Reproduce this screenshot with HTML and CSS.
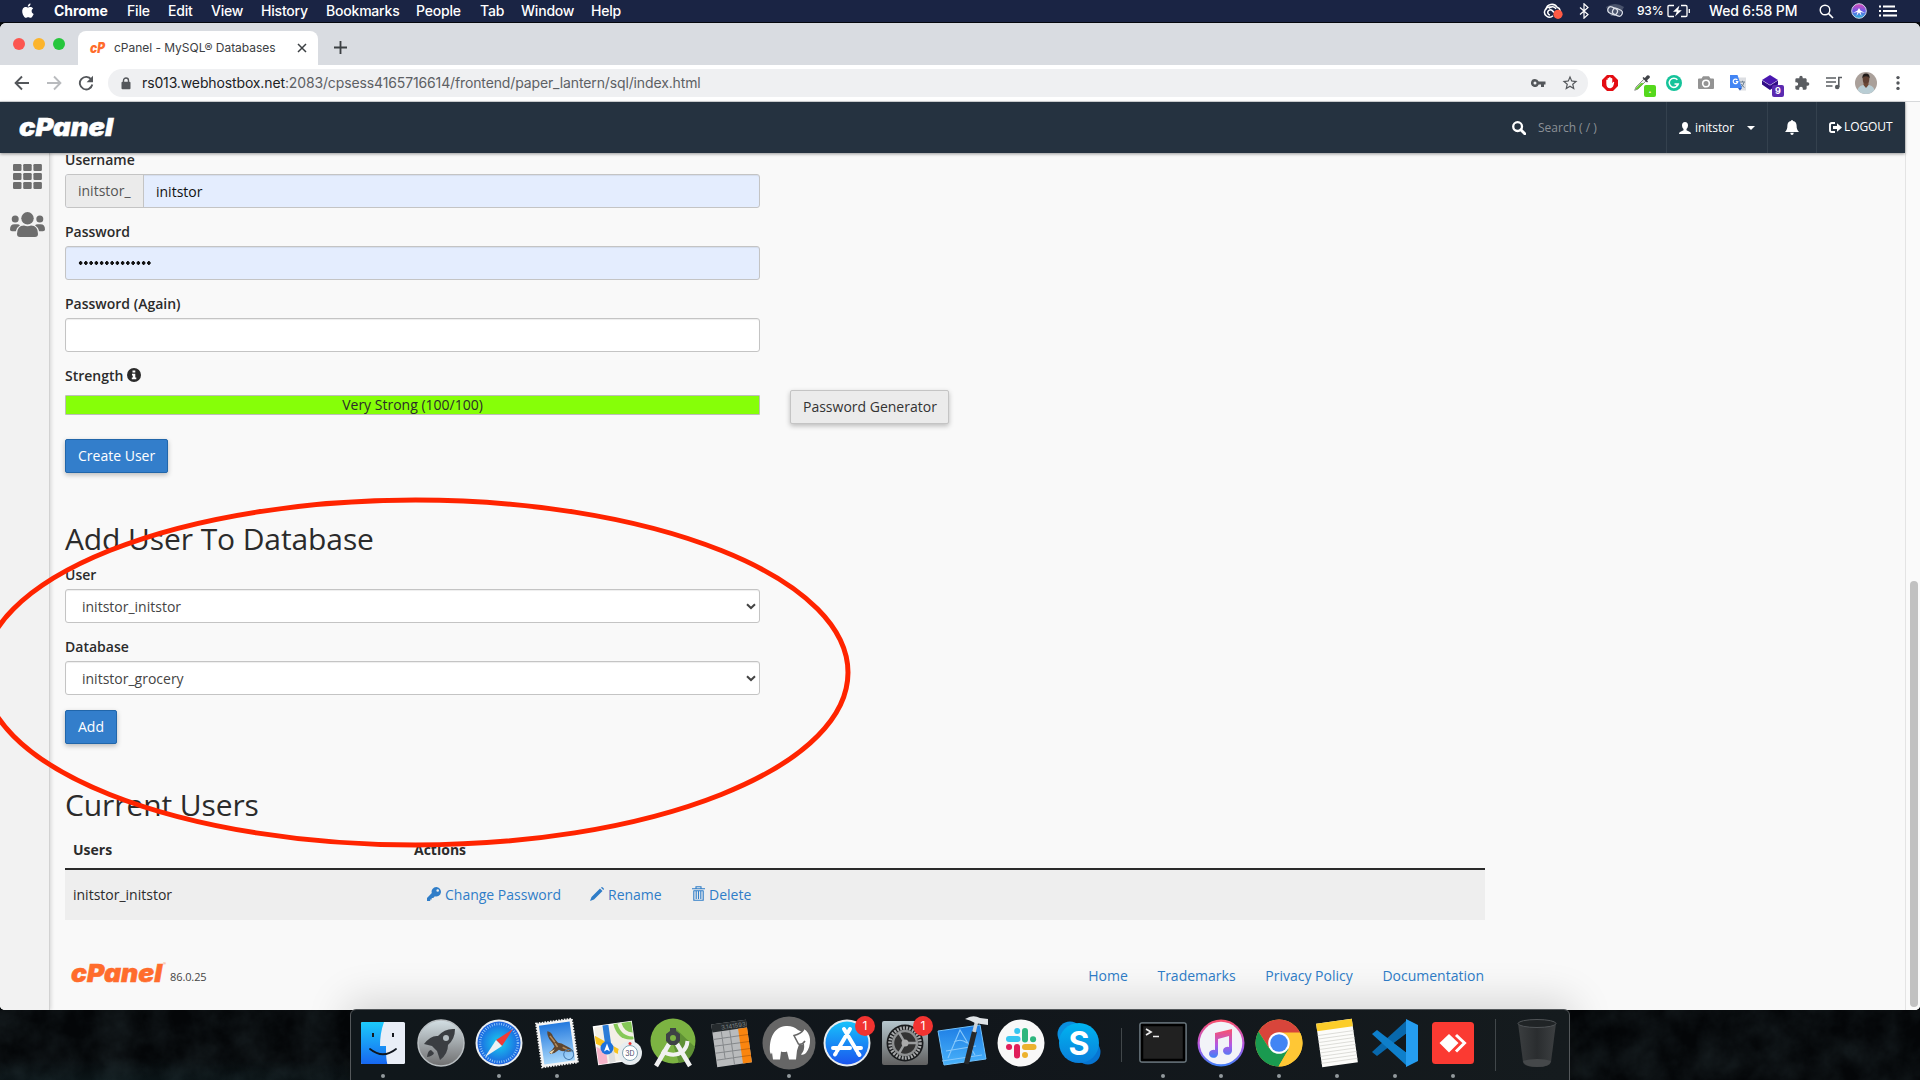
FILE: index.html
```html
<!DOCTYPE html>
<html lang="en">
<head>
<meta charset="utf-8">
<title>cPanel - MySQL® Databases</title>
<link rel="stylesheet" href="styles.css">
</head>
<body>
<div class="desktop">
  <header class="menubar">
    <nav class="menus">
      <svg class="apple" viewBox="0 0 14 17"><path d="M11.6 9c0-1.700 1.400-2.500 1.500-2.600-.8-1.200-2.100-1.400-2.500-1.400-1.100-.1-2.100.6-2.600.6S6.600 5 5.700 5C4.500 5 3.400 5.700 2.800 6.700c-1.300 2.200-.3 5.500.9 7.300.6.900 1.300 1.900 2.200 1.800.9 0 1.200-.6 2.300-.6s1.400.6 2.300.6c1 0 1.600-.9 2.100-1.800.7-1 1-2 1-2.100 0 0-2-.7-2-2.900zM9.800 3.700c.5-.6.8-1.400.7-2.200-.7 0-1.500.5-2 1-.4.500-.8 1.400-.7 2.100.8.100 1.600-.4 2-.9z" fill="#fff"/></svg>
      <b>Chrome</b><span>File</span><span>Edit</span><span>View</span><span>History</span><span>Bookmarks</span><span>People</span><span>Tab</span><span>Window</span><span>Help</span>
    </nav>
    <div class="status">
      <svg class="cc" viewBox="0 0 22 16"><g fill="none" stroke="#fff" stroke-width="1.500"><path d="M5 6.500A6 6 0 0 1 16 4.200a4 4 0 0 1 3 4"/><path d="M12 12.800A5 5 0 1 1 10.500 4.500M9 12a2.600 2.600 0 1 1 2-4.600l2 2"/><path d="M8 5.500a4 4 0 0 1 7 .5"/></g><circle cx="17" cy="11.300" r="4.600" fill="#ff5a44"/></svg>
      <svg class="bt" viewBox="0 0 10 16"><path d="M1 4.500l8 7-4 3.700V.8l4 3.700-8 7" fill="none" stroke="#fff" stroke-width="1.200"/></svg>
      <svg class="link" viewBox="0 0 20 15"><path d="M1 3Q10-3 19 3L14 12H6z" fill="#48526b"/><g fill="none" stroke="#dde1ea" stroke-width="1.300"><rect x="2.500" y="3.500" width="10" height="6.500" rx="3.200" transform="rotate(24 7.500 7)"/><rect x="7.500" y="5" width="10" height="6.500" rx="3.200" transform="rotate(24 12.500 8)"/></g></svg>
      <span class="pct">93%</span>
      <svg class="batt" viewBox="0 0 24 14"><path d="M7 1.500H2.200Q1 1.500 1 2.700v8.600q0 1.200 1.200 1.200H7M14 1.500h4.800q1.200 0 1.200 1.200v8.600q0 1.200-1.200 1.200H14M22.300 5v4" fill="none" stroke="#fff" stroke-width="1.300"/><path d="M12.500 1.500L6 7.700h3.800L8 12.500l6.800-6.200h-3.700z" fill="#fff"/></svg>
      <span class="clock">Wed 6:58 PM</span>
      <svg class="spot" viewBox="0 0 15 15"><circle cx="6" cy="6" r="4.800" fill="none" stroke="#fff" stroke-width="1.400"/><path d="M9.600 9.600l4.400 4.400" stroke="#fff" stroke-width="1.600"/></svg>
      <svg class="siri" viewBox="0 0 16 16"><defs><linearGradient id="si" x1="0" y1="0" x2="0" y2="1"><stop offset="0" stop-color="#e046b4"/><stop offset=".5" stop-color="#6a5be8"/><stop offset="1" stop-color="#23b9d8"/></linearGradient></defs><circle cx="8" cy="8" r="7.300" fill="url(#si)" stroke="#cdd3ea"/><path d="M8 5l1.500 2.500L14 10 9.500 9l1 4L8 9.500 5.500 13l1-4L2 10l4.500-2.500z" fill="#fff"/></svg>
      <svg class="list" viewBox="0 0 18 12"><path d="M0 1.500h2M0 6h2M0 10.500h2M4 1.500h12M4 6h14M4 10.500h14" stroke="#fff" stroke-width="1.800"/></svg>
    </div>
  </header>

  <section class="window">
    <div class="tabstrip">
      <div class="lights"><i class="red"></i><i class="amber"></i><i class="green"></i></div>
      <div class="tab">
        <svg class="favicon" viewBox="0 0 17 22"><text x="1" y="16" textLength="15" lengthAdjust="spacingAndGlyphs" class="mark">cP</text></svg>
        <span class="tab-title">cPanel - MySQL® Databases</span>
        <svg class="tab-x" viewBox="0 0 10 10"><path d="M1 1l8 8M9 1L1 9" stroke="#3c4043" stroke-width="1.500"/></svg>
      </div>
      <svg class="newtab" viewBox="0 0 12 12"><path d="M6 0v12M0 6h12" stroke="#3c4043" stroke-width="1.700"/></svg>
    </div>

    <div class="toolbar">
      <svg class="nav" viewBox="0 0 16 16"><path d="M15 8H2M8 1.500L1.600 8 8 14.500" fill="none" stroke="#54575b" stroke-width="1.900"/></svg>
      <svg class="nav" viewBox="0 0 16 16"><path d="M1 8h13M8 1.500L14.400 8 8 14.500" fill="none" stroke="#b9bbbe" stroke-width="1.900"/></svg>
      <svg class="nav" viewBox="0 0 16 16"><path d="M13.300 4.500A6.300 6.300 0 1 0 14.300 9.500" fill="none" stroke="#54575b" stroke-width="1.900"/><path d="M15 0.800v6.400H8.600z" fill="#54575b"/></svg>
      <div class="omnibox">
        <svg class="lock" viewBox="0 0 10 13"><path d="M2.500 5V3.500a2.500 2.500 0 0 1 5 0V5" fill="none" stroke="#54575b" stroke-width="1.400"/><rect x=".5" y="4.800" width="9" height="7.400" rx="1" fill="#54575b"/></svg>
        <span class="url"><b>rs013.webhostbox.net</b>:2083/cpsess4165716614/frontend/paper_lantern/sql/index.html</span>
        <svg class="key" viewBox="0 0 15 8"><path d="M4 0a4 4 0 1 0 3.700 5.400H10V8h3V5.400h1.500V2.600H7.700A4 4 0 0 0 4 0zm0 2.500a1.500 1.500 0 1 1 0 3 1.500 1.500 0 0 1 0-3z" fill="#54575b"/></svg>
        <svg class="star" viewBox="0 0 24 24"><path d="M22 9.240l-7.190-.62L12 2 9.190 8.630 2 9.240l5.460 4.730L5.820 21 12 17.270 18.180 21l-1.630-7.030L22 9.240zM12 15.400l-3.760 2.270 1-4.280-3.320-2.880 4.380-.38L12 6.100l1.710 4.040 4.380.38-3.320 2.880 1 4.280L12 15.400z" fill="#54575b"/></svg>
      </div>
      <div class="exts">
        <span><svg viewBox="0 0 16 16"><path d="M5 0h6l5 5v6l-5 5H5l-5-5V5z" fill="#e40d13"/><path d="M4.300 8.500V5q.7-.8 1.300 0V3.300q.8-.8 1.500 0v-.8q.8-.9 1.600 0v.8q.9-.7 1.600.2v4.700l.9-1.300q1-.3 1 .7C11.500 11 11 13 8.500 13.200 5.500 13.300 4.300 11.500 4.300 8.500z" fill="#fff"/></svg></span>
        <span><svg viewBox="0 0 16 16"><path d="M10 4L2 12l-1.300 3.300L4 14l8-8z" fill="#eee" stroke="#777" stroke-width=".8"/><path d="M7 8l3 .3L4 14l-2.500.7.500-1.700z" fill="#63cc2d"/><path d="M8.500 3l4.500 4.500 1-1-1-1.300L15.500 3A1.800 1.800 0 0 0 13 .5L10.800 3 9.500 2z" fill="#404348"/></svg><em class="lime">.</em></span>
        <span><svg viewBox="0 0 16 16"><circle cx="8" cy="8" r="8" fill="#15c39a"/><path d="M11.400 4.800A4.600 4.600 0 1 0 12.300 9H8.500M12.300 9l-1.800 2.300" fill="none" stroke="#fff" stroke-width="1.500"/></svg></span>
        <span><svg viewBox="0 0 16 16"><path d="M1 3.500h2.500L5 1.300h6l1.500 2.200H15q1 0 1 1V13q0 1-1 1H1q-1 0-1-1V4.500q0-1 1-1z" fill="#939393"/><circle cx="8" cy="8.500" r="3.300" fill="none" stroke="#fff" stroke-width="1.600"/></svg></span>
        <span><svg viewBox="0 0 16 16"><path d="M6 2.500h10v13H9z" fill="#dcdee2"/><path d="M10 7h5M12.500 5.800V7M10.500 12.500q3-1.500 3.500-5.300M11.300 9q1 2.300 3.200 3.500" fill="none" stroke="#6b7f92"/><path d="M0 0h7.500L12 13H0z" fill="#4285f4"/><path d="M8 13h4l-2 2.500z" fill="#2459c7"/><path d="M7.400 5A2.300 2.300 0 1 0 7.800 6.700H5.800" fill="none" stroke="#fff" stroke-width="1.200"/></svg></span>
        <span><svg viewBox="0 0 16 16"><path d="M8 0l8 5-8 5-8-5z" fill="#4a17b0"/><path d="M0 5.500l8 5 8-5v4L8 15 0 9.500z" fill="#310d87"/></svg><em class="violet">9</em></span>
        <span><svg viewBox="0 0 24 24"><path d="M20.500 11H19V7c0-1.100-.9-2-2-2h-4V3.500a2.500 2.500 0 0 0-5 0V5H4a2 2 0 0 0-2 2v3.800h1.500c1.500 0 2.700 1.200 2.700 2.700S5 16.200 3.500 16.200H2V20c0 1.100.9 2 2 2h3.800v-1.500c0-1.500 1.200-2.700 2.700-2.700s2.700 1.200 2.700 2.700V22H17a2 2 0 0 0 2-2v-4h1.500a2.500 2.500 0 0 0 0-5z" fill="#5a5d61"/></svg></span>
        <span><svg viewBox="0 0 16 16"><path d="M0 3h10M0 7h10M0 11h6.500" stroke="#5a5d61" stroke-width="1.500"/><path d="M12.800 12V2.500H16" fill="none" stroke="#5a5d61" stroke-width="1.600"/><circle cx="11.200" cy="12" r="2.300" fill="#5a5d61"/></svg></span>
        <span><svg class="avatar" viewBox="0 0 22 22"><defs><clipPath id="av"><circle cx="11" cy="11" r="11"/></clipPath></defs><g clip-path="url(#av)"><path d="M0 0h22v22H0z" fill="#aaa09a"/><path d="M2 22q0-8 6-9h6q6 1 6 9z" fill="#b9cdd4"/><path d="M8.500 9h5v4L11 16l-2.500-3z" fill="#6e4937"/><ellipse cx="11" cy="7" rx="3.300" ry="4.500" fill="#5f4033"/><path d="M7.400 6.500Q7 1.500 11 1.500t3.600 5Q14 4.300 11 4.300T7.400 6.500z" fill="#201b1a"/></g></svg></span>
        <span><svg viewBox="0 0 16 16"><g fill="#54575b"><circle cx="8" cy="2.600" r="1.700"/><circle cx="8" cy="8" r="1.700"/><circle cx="8" cy="13.400" r="1.700"/></g></svg></span>
      </div>
    </div>

    <div class="page">
      <div class="view">
        <div class="cp-header">
          <svg class="cp-logo" viewBox="0 0 100 32"><text x="1" y="24" textLength="94" lengthAdjust="spacingAndGlyphs" class="wordmark">cPanel</text></svg>
          <div class="cp-search">
            <svg viewBox="0 0 14 14"><circle cx="5.600" cy="5.600" r="4.400" fill="none" stroke="#fff" stroke-width="2.300"/><path d="M8.800 8.800l4 4" stroke="#fff" stroke-width="2.900" stroke-linecap="round"/></svg>
            <span>Search ( / )</span>
          </div>
          <div class="cp-user"><svg viewBox="0 0 12 12"><path d="M6 0C4 0 3 1.300 3 3.300c0 1.500.6 3 1.500 3.800v1.200L1 10Q0 10.500 0 12h12q0-1.500-1-2L7.500 8.300V7.100C8.400 6.300 9 4.800 9 3.300 9 1.300 8 0 6 0z" fill="#fff"/></svg><span>initstor</span><i class="caret"></i></div>
          <div class="cp-bell"><svg viewBox="0 0 14 15"><path d="M7 0q1 0 1 1c2.500.5 3.600 2.200 3.600 4.500 0 3.300.8 4.700 2.400 6.500H0c1.600-1.800 2.400-3.200 2.400-6.500C2.400 3.200 3.500 1.500 6 1q0-1 1-1zM5.200 12.800h3.600Q8.500 15 7 15t-1.800-2.200z" fill="#fff"/></svg></div>
          <div class="cp-logout"><svg viewBox="0 0 13 11"><path d="M6 1H2.800Q1 1 1 2.800v5.400Q1 10 2.800 10H6" fill="none" stroke="#fff" stroke-width="1.900"/><path d="M4 4h4V1.300l5 4.200-5 4.200V7H4z" fill="#fff"/></svg><span>LOGOUT</span></div>
        </div>

        <div class="cp-body">
          <aside class="sidebar">
            <svg class="grid-ic" viewBox="0 0 29 25"><g fill="#6e6e6e"><rect width="8.500" height="7" rx="1.200"/><rect x="10.200" width="8.500" height="7" rx="1.200"/><rect x="20.400" width="8.500" height="7" rx="1.200"/><rect y="9" width="8.500" height="7" rx="1.200"/><rect x="10.200" y="9" width="8.500" height="7" rx="1.200"/><rect x="20.400" y="9" width="8.500" height="7" rx="1.200"/><rect y="18" width="8.500" height="7" rx="1.200"/><rect x="10.200" y="18" width="8.500" height="7" rx="1.200"/><rect x="20.400" y="18" width="8.500" height="7" rx="1.200"/></g></svg>
            <svg class="users-ic" viewBox="0 0 35 25"><g fill="#6e6e6e"><circle cx="17.500" cy="6.300" r="6.200"/><circle cx="5.200" cy="7" r="3.500"/><circle cx="29.800" cy="7" r="3.500"/><path d="M7 22q0-8.500 7-8.500 3.500 1.500 7 0 7 0 7 8.500 0 3-3 3H10q-3 0-3-3zM0 17.500Q0 12.300 4.500 12.300h2.800q1.700 0 2.700 1-3.500 2.300-4.200 6H2q-2 0-2-1.800zM35 17.500q0-5.200-4.500-5.200h-2.800q-1.700 0-2.700 1 3.500 2.300 4.200 6H33q2 0 2-1.800z"/></g></svg>
          </aside>
          <main class="content">
            <div class="field"><label>Username</label><div class="control filled"><span class="addon">initstor_</span><span class="typed">initstor</span></div></div>
            <div class="field"><label>Password</label><div class="control filled"><span class="dots"></span></div></div>
            <div class="field"><label>Password (Again)</label><div class="control"></div></div>
            <div class="strength">
              <label>Strength <svg viewBox="0 0 14 14"><circle cx="7" cy="7" r="7" fill="#2b2b2b"/><path d="M5.500 2.500h2.800v2H5.500zM5 5.700h3.300v3.800h1v1.700H4.800V9.500h1V7.400H5z" fill="#fff"/></svg></label>
              <div class="meter-row"><div class="meter">Very Strong (100/100)</div><button class="btn plain">Password Generator</button></div>
            </div>
            <button class="btn primary">Create User</button>

            <h2 class="h-add">Add User To Database</h2>
            <div class="field"><label>User</label><div class="control select"><span>initstor_initstor</span><svg viewBox="0 0 10 7"><path d="M1 1.200l4 3.800 4-3.800" fill="none" stroke="#444" stroke-width="2"/></svg></div></div>
            <div class="field"><label>Database</label><div class="control select"><span>initstor_grocery</span><svg viewBox="0 0 10 7"><path d="M1 1.200l4 3.800 4-3.800" fill="none" stroke="#444" stroke-width="2"/></svg></div></div>
            <button class="btn primary add">Add</button>

            <h2 class="h-cur">Current Users</h2>
            <div class="table">
              <div class="tr th"><span>Users</span><span>Actions</span></div>
              <div class="tr td"><span>initstor_initstor</span>
                <div class="actions">
                  <a class="a-pass"><svg viewBox="0 0 14 14"><path d="M9.300 0a4.700 4.700 0 0 0-4.500 6.100L0 11v3h3.200v-1.500h1.500V11h1.500l1.700-1.800A4.700 4.700 0 1 0 9.300 0zm1.400 2.200a1.300 1.300 0 1 1 0 2.600 1.300 1.300 0 0 1 0-2.600z" fill="#2f7dc8"/></svg>Change Password</a>
                  <a class="a-ren"><svg viewBox="0 0 14 14"><path d="M10 1.500L12.500 4 4 12.500 0 14l1.500-4zM11 .7q.8-1.200 1.800-.2l.8.700q.8.900-.3 1.800z" fill="#2f7dc8"/></svg>Rename</a>
                  <a class="a-del"><svg viewBox="0 0 13 15"><path d="M0 2.700h13M4 2.500V.7h5v1.800M1.800 4.500v9.800h9.400V4.500M4.200 4.500v8.500M6.500 4.500v8.500M8.800 4.500v8.500M1.800 4.700h9.400" fill="none" stroke="#2f7dc8" stroke-width="1.100"/></svg>Delete</a>
                </div>
              </div>
            </div>
            <footer class="foot">
              <svg class="foot-logo" viewBox="0 0 100 32"><text x="2" y="25" textLength="91" lengthAdjust="spacingAndGlyphs" class="wordmark orange">cPanel</text><text x="94" y="8" class="reg">®</text></svg>
              <span class="ver">86.0.25</span>
              <nav><a>Home</a><a>Trademarks</a><a>Privacy Policy</a><a>Documentation</a></nav>
            </footer>
          </main>
        </div>
      </div>
      <div class="scroll"><i></i></div>
    </div>
  </section>

  <div class="wall">
    <svg class="grain" width="1920" height="70"><filter id="g"><feTurbulence type="fractalNoise" baseFrequency=".03" numOctaves="6" seed="4"/><feColorMatrix values="0 0 0 0 .1  0 0 0 0 .17  0 0 0 0 .19  1.100 0 0 0 -.3"/></filter><rect width="1920" height="70" filter="url(#g)"/></svg>
  </div>

  <div class="dock">
    <div class="app on"><svg viewBox="0 0 58 58"><defs><linearGradient id="f1" x1="0" y1="0" x2="0" y2="1"><stop offset="0" stop-color="#1ccbfb"/><stop offset="1" stop-color="#1767f1"/></linearGradient></defs><rect x="7" y="8" width="44" height="42" rx="1.500" fill="#e9eef7"/><path d="M8.500 8H30q-4 11-4 24h6v3q0 10 1.300 15H8.500Q7 50 7 48.500v-39Q7 8 8.500 8z" fill="url(#f1)"/><path d="M19 19v4M39 19v4" stroke="#161a20" stroke-width="2"/><path d="M16 35q13 10.500 26 0" fill="none" stroke="#10161f" stroke-width="1.800" stroke-linecap="round"/></svg></div>
    <div class="app"><svg viewBox="0 0 58 58"><defs><linearGradient id="l1" x1="0" y1="0" x2="0" y2="1"><stop offset="0" stop-color="#d3dfe4"/><stop offset="1" stop-color="#6f6f70"/></linearGradient></defs><circle cx="29" cy="29" r="23" fill="url(#l1)" stroke="#b9bfc2" stroke-width="1.500"/><path d="M43 15q-10-1-17 7-7-1-14 8l8 2 5 5 3 9q8-6 8-15 7-6 7-16zM19 36q-3 0-4 7 6-1 7-4z" fill="#3b3e42"/><circle cx="34" cy="24" r="3" fill="#b5bdc1"/></svg></div>
    <div class="app on"><svg viewBox="0 0 58 58"><defs><radialGradient id="s1"><stop offset="0" stop-color="#18d0ef"/><stop offset="1" stop-color="#1c62e0"/></radialGradient></defs><circle cx="29" cy="29" r="23.500" fill="#e9edf0"/><circle cx="29" cy="29" r="21.500" fill="url(#s1)"/><circle cx="29" cy="29" r="19" fill="none" stroke="#9fd2fb" stroke-width="2.500" stroke-dasharray=".8 1.600"/><path d="M43 15L26 26l6 6z" fill="#f03a37"/><path d="M15 43l11-17 6 6z" fill="#eef1f2"/></svg></div>
    <div class="app on"><svg viewBox="0 0 58 58"><defs><linearGradient id="m1" x1="0" y1="0" x2="0" y2="1"><stop offset="0" stop-color="#2379de"/><stop offset="1" stop-color="#a9d8fb"/></linearGradient></defs><g transform="rotate(-8 29 29)"><rect x="11" y="7" width="36" height="44" fill="#f4f4f4" stroke="#f4f4f4" stroke-width="2" stroke-dasharray="1.600 1.200"/><rect x="13.500" y="9.500" width="31" height="39" fill="url(#m1)"/><path d="M21 16q4 1 5 6 2 4 4 7 4 1 6 3 5 3 8 7-5 1-9-1-3 0-5-2-4 3-9 3l-1-2q4-2 6-5-1-3-3-6-3-5-2-10z" fill="#5f4630"/><path d="M27 29l2 4M23 21l4 7M34 34l6 4" stroke="#b58c5c" stroke-width="1.500"/><path d="M20 37l6-2-4 4z" fill="#e9d9b5"/><circle cx="39" cy="42" r="5" fill="none" stroke="#4479ae"/></g></svg></div>
    <div class="app"><svg viewBox="0 0 58 58"><g transform="rotate(-8 29 29)"><rect x="10" y="10" width="38" height="38" fill="#f3efe6" stroke="#fff" stroke-width="1.500"/><path d="M30 10h18v18Q32 28 30 10z" fill="#86c858"/><path d="M36 10q2 12 12 13" fill="none" stroke="#f3efe6" stroke-width="4"/><path d="M10 19l28 21h-8L10 27z" fill="#f9c31c"/><path d="M10 30l9 7v11h-9z" fill="#f6b4c9"/><path d="M21 48V32h6v16z" fill="#ddd"/><path d="M19 10h6v24h-6z" fill="#2b7cd8"/></g><circle cx="21" cy="34" r="6.500" fill="#1d72dc"/><path d="M21 29.500l3 8-3-1.800-3 1.800z" fill="#fff"/><circle cx="44" cy="39" r="12" fill="#e8edf0"/><circle cx="44" cy="39" r="7.500" fill="#fff" stroke="#80a2b2"/><text x="44" y="42" class="three">3D</text><circle cx="44" cy="29.500" r="1.500" fill="#e33"/></svg></div>
    <div class="app"><svg viewBox="0 0 58 58"><circle cx="29" cy="27" r="22.500" fill="#7cb342"/><path d="M32 15l19 18Q47 48 35 49L29 30z" fill="#5f9135"/><path d="M25 30L12 52M33 30l13 22" stroke="#f1f1f1" stroke-width="4.500"/><path d="M18 37q11 7 20 1 5-4 5.500-11" fill="none" stroke="#f1f1f1" stroke-width="4"/><path d="M26 14h6v3l4 3v7l-4 4h-6l-4-4v-7l4-3z" fill="#3e4245"/><circle cx="29" cy="24" r="3" fill="#7cb342"/></svg></div>
    <div class="app"><svg viewBox="0 0 58 58"><g transform="rotate(-8 29 29)"><rect x="12" y="8" width="35" height="43" fill="#b9bbbd"/><rect x="12" y="8" width="35" height="8" fill="#262b2e"/><rect x="38" y="16" width="9" height="35" fill="#fa850f"/><path d="M12 23h26M12 30h26M12 37h26M12 44h26M21 16v28M29.500 16v35" stroke="#85888b"/><path d="M38 23h9M38 30h9M38 37h9M38 44h9" stroke="#c9690c"/><text x="46" y="14.500" class="calc">3.141593</text></g></svg></div>
    <div class="app on"><svg viewBox="0 0 58 58"><circle cx="29" cy="29" r="26.500" fill="#666"/><path d="M10 38C9 24 14 13 26 12q7-.5 12 4 2 1.500 4 1l2-2q5 3 6 10 .5 8-4 14-2.500 2.500-5 1.500 4-4 3-11-2 2-5 1l-2 6-1 9h-7l-2-8q-3 1-6 0l-1 8h-7l-1-7-1 2z" fill="#fff"/><path d="M44 15q-3 5-10 6.500L38.500 30q4 1 6.500-3" fill="none" stroke="#666" stroke-width="1.500"/></svg></div>
    <div class="app"><svg viewBox="0 0 58 58"><defs><linearGradient id="a1" x1="0" y1="0" x2="0" y2="1"><stop offset="0" stop-color="#17c2fb"/><stop offset="1" stop-color="#1b54ee"/></linearGradient></defs><circle cx="29" cy="29" r="23.500" fill="#e8ecef"/><circle cx="29" cy="29" r="21.500" fill="url(#a1)"/><path d="M32 15L19 37M26 15l13 22M15 34h17M38 34h5M18 39l-1 1.500M40 39l1.500 2" stroke="#fff" stroke-width="4" stroke-linecap="round"/></svg><em>1</em></div>
    <div class="app"><svg viewBox="0 0 58 58"><defs><linearGradient id="p1" x1="0" y1="0" x2="0" y2="1"><stop offset="0" stop-color="#b5c6cd"/><stop offset="1" stop-color="#606060"/></linearGradient></defs><rect x="6" y="7" width="46" height="44" rx="2" fill="url(#p1)"/><circle cx="29" cy="29" r="18.500" fill="#191b1d"/><circle cx="29" cy="29" r="15" fill="none" stroke="#a7a9aa" stroke-width="3.500" stroke-dasharray="1.900 1.200"/><circle cx="29" cy="29" r="12" fill="#333" stroke="#8d8f90" stroke-width="2.500"/><path d="M29 29h12M29 29l-6-10.400M29 29l-6 10.400" stroke="#9b9d9e" stroke-width="2.500"/><circle cx="29" cy="29" r="3.500" fill="#aaa"/></svg><em>1</em></div>
    <div class="app"><svg viewBox="0 0 58 58"><defs><linearGradient id="x1" x1="0" y1="0" x2="0" y2="1"><stop offset="0" stop-color="#1c7ce4"/><stop offset="1" stop-color="#49b2fa"/></linearGradient></defs><path d="M4 17l42-6 6 34-42 6z" fill="url(#x1)" stroke="#6fc0fb"/><path d="M14 44l12-28 15 25M12 37l30-5M20 28q7-4 13 1M8 47l40-6" fill="none" stroke="#86c8fb" stroke-width="1.100"/><path d="M43 18L35 50q-3 1-5-1l8-32z" fill="#26282b"/><path d="M40 18l3-12" stroke="#ccd2d6" stroke-width="3.500"/><path d="M31 5q8-5 15-1l8 1v6l-7-1-6-1q-5-3-10-4z" fill="#dfe3e6"/></svg></div>
    <div class="app"><svg viewBox="0 0 58 58"><circle cx="29" cy="29" r="23.500" fill="#f8f8f8"/><g stroke-width="6" stroke-linecap="round"><path d="M17 25h8.500" stroke="#36c5f0"/><path d="M25.200 17v.1" stroke="#36c5f0"/><path d="M33 17v8.500" stroke="#2eb67d"/><path d="M41 25.200h.1" stroke="#2eb67d"/><path d="M33 33h8.500" stroke="#ecb22e"/><path d="M33 41v.1" stroke="#ecb22e"/><path d="M25 33v8.500" stroke="#e01e5a"/><path d="M17 33h.1" stroke="#e01e5a"/></g></svg></div>
    <div class="app"><svg viewBox="0 0 58 58"><g fill="#0a8fdf"><circle cx="20" cy="20" r="12.500"/><circle cx="38" cy="38" r="12.500" fill="#0775d2"/></g><defs><linearGradient id="k1" x1="0" y1="0" x2="0" y2="1"><stop offset="0" stop-color="#00b4f0"/><stop offset="1" stop-color="#0a7fdb"/></linearGradient></defs><circle cx="29" cy="29" r="20" fill="url(#k1)"/><text x="29" y="40.500" class="skype">S</text></svg></div>
    <i class="sep"></i>
    <div class="app on"><svg viewBox="0 0 58 58"><rect x="6" y="9" width="46" height="39" rx="2" fill="#212121" stroke="#75838a" stroke-width="1.500"/><rect x="8" y="11" width="42" height="35" fill="none" stroke="#000" stroke-width="2.500"/><path d="M12 15l5 3-5 3M19 22.500h6" fill="none" stroke="#eee" stroke-width="1.700"/></svg></div>
    <div class="app on"><svg viewBox="0 0 58 58"><defs><linearGradient id="i2" x1="0" y1="0" x2="0" y2="1"><stop offset="0" stop-color="#fb5069"/><stop offset=".55" stop-color="#b358e4"/><stop offset="1" stop-color="#3d81f8"/></linearGradient></defs><circle cx="29" cy="29" r="23.500" fill="url(#i2)"/><circle cx="29" cy="29" r="21.300" fill="#f2f3f8"/><path d="M23 19l17-4v22a4.500 4 0 1 1-3-4V22l-11 3v15a4.500 4 0 1 1-3-4z" fill="url(#i2)"/></svg></div>
    <div class="app on"><svg viewBox="0 0 58 58"><circle cx="29" cy="29" r="23.500" fill="#ffc735"/><path d="M8.500 17.500A23.500 23.500 0 0 1 50 18.500H29L19 34z" fill="#d8453b"/><path d="M8.500 17.500A23.500 23.500 0 0 0 28.500 52.500L38.500 35 19 34z" fill="#1a9a50"/><path d="M28.500 52.500L39 35V19h11.300A23.500 23.500 0 0 1 28.500 52.500z" fill="#ffc735"/><circle cx="29" cy="29" r="10.800" fill="#fff"/><circle cx="29" cy="29" r="8.800" fill="#4285f4"/></svg></div>
    <div class="app on"><svg viewBox="0 0 58 58"><g transform="rotate(-8 29 29)"><rect x="11" y="7" width="36" height="44" fill="#fcfcfa"/><path d="M11 19h36M11 22.500h36M11 26h36M11 29.500h36M11 33h36M11 36.500h36M11 40h36M11 43.500h36M11 47h36" stroke="#d7d7d2" stroke-width=".8"/><rect x="11" y="7" width="36" height="7.500" fill="#fccd2a"/></g></svg></div>
    <div class="app on"><svg viewBox="0 0 58 58"><path d="M6 38l5 4 30-23V6z" fill="#0868ac"/><path d="M6 20l5-4 30 23v13L6 20z" fill="#0e7fcb"/><path d="M40 5l12 6v36l-12 6z" fill="#259df0"/><path d="M40 20L28 29l12 9z" fill="#12181c"/></svg></div>
    <div class="app on"><svg viewBox="0 0 58 58"><rect x="8" y="8" width="42" height="42" rx="3.500" fill="#fb3a32"/><path d="M25 20l9.500 9-9.500 9.500L15.500 29z" fill="#fff"/><path d="M32 21l8.500 8-8.500 8.500" fill="none" stroke="#fff" stroke-width="3"/></svg></div>
    <i class="sep tall"></i>
    <div class="app"><svg viewBox="0 0 58 58"><defs><linearGradient id="t1" x1="0" y1="0" x2="1" y2="0"><stop offset="0" stop-color="#3b3e40"/><stop offset=".5" stop-color="#2a2d2f"/><stop offset="1" stop-color="#3d4042"/></linearGradient></defs><path d="M10 9l5 39q1 5 14 5t14-5l5-39z" fill="url(#t1)"/><path d="M15 47q1 6 14 6t14-6q-5-2-14-2t-14 2z" fill="#45484a"/><ellipse cx="29" cy="9.500" rx="19" ry="4" fill="#202426" stroke="#505457"/></svg></div>
  </div>

  <svg class="ring" viewBox="0 0 1920 1080"><ellipse cx="415.500" cy="672.500" rx="432.500" ry="172.500" fill="none" stroke="#ff2400" stroke-width="5"/></svg>
</div>
</body>
</html>
```
FILE: styles.css
```css
* { box-sizing: border-box; }
body { margin: 0; font-family: "Open Sans", "Noto Sans", sans-serif; font-size: 14px; color: #2b2b2b; }
svg { display: block; flex: none; }
em, i { font-style: normal; }
.desktop { position: relative; width: 1920px; height: 1080px; overflow: hidden; background: #05080a; display: flex; flex-direction: column; }

/* macOS menu bar */
.menubar { height: 23px; flex: none; background: #1a2444; border-bottom: 1px solid #05070d; display: flex; justify-content: space-between; color: #fff; font: 500 14px/22px Inter, sans-serif; }
.menus { display: grid; grid-template-columns: 34px 73px 41px 43px 50px 65px 90px 64px 41px 70px 40px; padding-left: 20px; white-space: nowrap; letter-spacing: -.2px; }
.menus b { font-weight: 700; letter-spacing: -.05px; }
.apple { width: 14px; height: 17px; margin-top: 2px; }
.status { display: flex; align-items: center; height: 22px; padding-right: 23px; white-space: nowrap; }
.cc { width: 22px; height: 16px; margin-right: 16px; }
.bt { width: 10px; height: 16px; margin-right: 16px; }
.link { width: 20px; height: 15px; margin-right: 12px; }
.pct { width: 30px; font-size: 12px; letter-spacing: -.2px; }
.batt { width: 24px; height: 14px; margin-right: 18px; }
.clock { width: 110px; letter-spacing: -.15px; }
.spot { width: 15px; height: 15px; margin-right: 17px; }
.siri { width: 16px; height: 16px; margin-right: 12px; }
.list { width: 18px; height: 12px; }

/* Browser chrome */
.window { height: 987px; flex: none; display: flex; flex-direction: column; border-radius: 6px 6px 5px 5px; overflow: hidden; background: #fff; }
.tabstrip { height: 42px; flex: none; background: #d9dce1; display: flex; padding-left: 13px; }
.lights { display: flex; gap: 8px; width: 65px; padding-top: 15px; }
.lights i { width: 12px; height: 12px; border-radius: 50%; }
.red { background: #fc5650; } .amber { background: #fcb42c; } .green { background: #26c63c; }
.tab { width: 240px; height: 34px; margin-top: 8px; padding-left: 11px; border-radius: 8px 8px 0 0; background: #fff; display: flex; align-items: center; font: 12px Inter, sans-serif; color: #3c4043; }
.favicon { width: 17px; height: 22px; margin-right: 8px; }
.mark { font: italic 900 14px Inter, sans-serif; fill: #ff6c2c; }
.tab-title { width: 183px; white-space: nowrap; letter-spacing: -.03px; padding-bottom: 2px; }
.tab-x { width: 10px; height: 10px; }
.newtab { width: 13px; height: 13px; margin: 18px 0 0 16px; }
.toolbar { height: 37px; flex: none; border-bottom: 1px solid #d7d9db; display: flex; align-items: center; padding-left: 14px; gap: 16px; }
.nav { width: 16px; height: 16px; }
.omnibox { width: 1480px; height: 28px; margin-left: -2px; border-radius: 14px; background: #eff0f2; display: flex; align-items: center; padding: 0 9px 0 13px; }
.lock { width: 10px; height: 13px; margin-right: 11px; }
.url { flex: 1; font: 14px Inter, sans-serif; letter-spacing: -.13px; color: #5d6064; white-space: nowrap; padding-bottom: 2px; }
.url b { font-weight: 400; color: #202124; }
.key { width: 15px; height: 8px; margin-right: 15px; }
.star { width: 18px; height: 18px; }
.exts { display: flex; margin-left: -10px; }
.exts span { position: relative; width: 32px; height: 30px; display: flex; align-items: center; justify-content: center; }
.exts svg { width: 16px; height: 16px; }
.exts .avatar { width: 22px; height: 22px; }
.exts em { position: absolute; left: 18px; top: 17px; width: 12px; height: 12px; border-radius: 2px; color: #fff; font: 700 9px/12px Inter, sans-serif; text-align: center; }
.exts .lime { background: #55d81c; line-height: 9px; } .exts .violet { background: #5b2ab0; }

/* cPanel page */
.page { flex: 1; min-height: 0; display: flex; background: #f9f9f9; }
.view { width: 1905px; display: flex; flex-direction: column; }
.scroll { width: 15px; border-left: 1px solid #e4e4e4; padding: 479px 0 0 4px; background: #fafafa; }
.scroll i { display: block; width: 8px; height: 426px; border-radius: 4px; background: #c1c1c1; }
.cp-header { position: relative; z-index: 1; height: 51px; flex: none; background: #253240; box-shadow: 0 1px 3px rgba(0,0,0,.4); display: flex; align-items: stretch; color: #fff; font-size: 12px; }
.cp-header span { padding-bottom: 1px; }
.cp-logo { width: 100px; height: 32px; margin: 10px 0 0 18px; }
.wordmark { font: italic 900 25px Inter, sans-serif; fill: #fff; stroke: #fff; stroke-width: .5px; }
.wordmark.orange { fill: #ff6c2c; stroke: #ff6c2c; }
.reg { font: 4px sans-serif; fill: #ff6c2c; }
.cp-search { margin-left: auto; width: 154px; display: flex; align-items: center; gap: 12px; color: #8b9096; }
.cp-search svg { width: 14px; height: 14px; }
.cp-user { width: 101px; border-left: 1px solid #34414e; display: flex; align-items: center; padding-left: 12px; gap: 4px; }
.cp-user svg { width: 12px; height: 12px; }
.cp-user span { width: 48px; letter-spacing: -.1px; }
.caret { border: 4px solid transparent; border-top-color: #fff; border-bottom: 0; }
.cp-bell { width: 49px; border-left: 1px solid #34414e; display: flex; align-items: center; justify-content: center; }
.cp-bell svg { width: 14px; height: 15px; }
.cp-logout { width: 89px; border-left: 1px solid #34414e; display: flex; align-items: center; padding-left: 12px; gap: 2px; letter-spacing: -.1px; }
.cp-logout span { padding-bottom: 2px; }
.cp-logout svg { width: 13px; height: 11px; }
.cp-body { flex: 1; min-height: 0; display: flex; }
.sidebar { width: 50px; flex: none; background: #f2f2f2; border-right: 1px solid #d2d2d2; box-shadow: 1px 0 4px rgba(0,0,0,.15); padding-top: 11px; }
.grid-ic { width: 29px; height: 25px; margin-left: 13px; }
.users-ic { width: 35px; height: 25px; margin: 23px 0 0 10px; }
.content { width: 1435px; padding-left: 15px; }
.field { width: 695px; margin-bottom: 10px; }
.field:first-child { margin-top: -7px; }
label { display: flex; align-items: center; gap: 4px; height: 28px; padding-bottom: 2px; font-weight: 600; }
label svg { width: 14px; height: 14px; margin-top: -1px; }
.control { height: 34px; border: 1px solid #c4c4c4; border-radius: 3px; background: #fff; box-shadow: inset 0 1px 1px rgba(0,0,0,.07); display: flex; align-items: center; }
.filled { background: #e4edfe; color: #111; }
.addon { align-self: stretch; width: 78px; padding-left: 12px; line-height: 31px; border-right: 1px solid #c4c4c4; background: #ebebeb; color: #555; border-radius: 2px 0 0 2px; }
.typed { padding-left: 12px; }
.dots { margin-left: 12px; width: 73.500px; height: 4px; background: radial-gradient(circle 2px at 2.600px 2px, #111 80%, transparent) 0 0 / 5.250px 4px repeat-x; }
.select { padding: 0 3px 0 16px; justify-content: space-between; color: #444; }
.select svg { width: 10px; height: 7px; }
.meter-row { display: flex; gap: 30px; height: 34px; }
.meter { width: 695px; height: 20px; margin-top: 5px; border: 1px solid #bcbfb8; border-radius: 1px; background: #86ff08; text-align: center; line-height: 18px; }
.btn { display: block; height: 34px; padding: 0 12px; border: 1px solid #c4c4c4; border-radius: 2px; font: 14px/30px "Open Sans", sans-serif; color: #333; box-shadow: 0 2px 5px rgba(0,0,0,.25); white-space: nowrap; }
.plain { background: #ebebeb; width: 159px; }
.primary { background: #337ecb; border-color: #2166aa; color: #fff; font-weight: 400; margin-top: 15px; width: 103px; }
.add { width: 52px; }
h2 { margin: 0; height: 40px; font-size: 30px; line-height: 42px; font-weight: 400; letter-spacing: -.1px; }
.h-add { margin-top: 45px; margin-bottom: 3px; }
.h-cur { margin-top: 40px; margin-bottom: 8px; }
.table { width: 1420px; }
.tr { display: grid; grid-template-columns: 341px 1fr; align-items: center; padding: 0 0 2px 8px; }
.th { height: 38px; border-bottom: 2px solid #2b2b2b; font-weight: 700; }
.td { height: 50px; background: #eee; }
.actions { display: grid; grid-template-columns: 163px 102px 80px; padding-left: 13px; }
.actions a { display: flex; align-items: center; gap: 4px; white-space: nowrap; }
a { color: #2f7dc8; }
.actions svg { width: 14px; height: 14px; }
.actions .a-del svg { width: 13px; height: 15px; margin-top: -2px; }
.foot { display: flex; width: 1420px; height: 44px; margin-top: 34px; align-items: center; }
.foot-logo { width: 100px; height: 32px; margin: -6px 1px 0 4px; }
.ver { font-size: 11px; color: #444; letter-spacing: -.1px; }
.foot nav { margin-left: auto; display: flex; gap: 29.700px; padding: 0 1px 2px 0; }

/* Wallpaper and dock */
.wall { height: 70px; flex: none; background: radial-gradient(ellipse at 5% 100%, #0b1518, #040608 22%), #040608; }
.grain { opacity: .28; }
.dock { position: absolute; left: 350px; top: 1009px; width: 1220px; height: 74px; padding: 4px 3px; display: flex; background: linear-gradient(90deg, #10171b, #11161b 50%, #151b1e); border: 1px solid #54585b; border-radius: 6px 6px 0 0; box-shadow: 0 -4px 40px 4px rgba(0,0,0,.15); }
.app { position: relative; width: 58px; flex: none; }
.app svg { width: 58px; height: 58px; }
.app.on::after { content: ""; position: absolute; left: 27px; top: 60px; width: 4px; height: 4px; border-radius: 50%; background: #92999c; }
.app em { position: absolute; left: 37px; top: 2px; width: 20px; height: 20px; border-radius: 50%; background: #f23330; color: #fff; font: 12px/20px Inter, sans-serif; text-align: center; }
.sep { width: 1px; height: 34px; margin: 14px 12px 0 13px; background: #41474a; }
.sep.tall { height: 52px; margin-top: 5px; }
.three { font: 7px Inter, sans-serif; fill: #446; text-anchor: middle; }
.calc { font: 6px Inter, sans-serif; fill: #7c8487; text-anchor: end; }
.skype { font: 700 32px Inter, sans-serif; fill: #fff; text-anchor: middle; }

/* Marker drawn over the screen */
.ring { position: absolute; left: 0; top: 0; width: 1920px; height: 1080px; }
```
